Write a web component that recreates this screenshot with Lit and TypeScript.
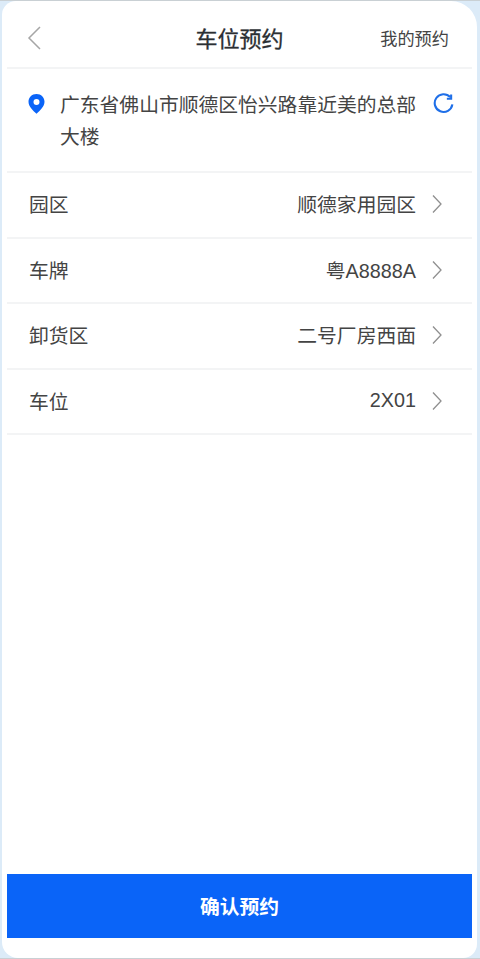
import { LitElement, html, css, svg } from "lit";
import { customElement } from "lit/decorators.js";

const chevron = svg`<path d="M2 1.500l8 8.500-8 8.500" fill="none" stroke="#8f8f8f" stroke-width="1.300"/>`;
const rows = [
  ["园区", "顺德家用园区"],
  ["车牌", "粤A8888A"],
  ["卸货区", "二号厂房西面"],
  ["车位", "2X01"],
];

@customElement("app-root")
export class AppRoot extends LitElement {
  static styles = css`
    :host {
      display: block;
      width: 480px;
      height: 959px;
      box-sizing: border-box;
      background: #c9d0d4;
      padding: 1px 0;
      font-family: "Liberation Sans", "Noto Sans CJK SC", sans-serif;
      color: #333;
      overflow: hidden;
    }
    .frame {
      height: 957px;
      background: #dcebf8;
      padding: 0 3px 0 2px;
      box-sizing: border-box;
    }
    .screen {
      height: 100%;
      background: #fff;
      border-radius: 14px 26px 14px 16px;
      padding: 0 5px 0 5px;
      box-sizing: border-box;
      display: flex;
      flex-direction: column;
    }
    .header {
      height: 68px;
      box-sizing: border-box;
      display: flex;
      align-items: center;
      justify-content: space-between;
      padding: 6px 23px 0 20px;
      border-bottom: 2px solid #f3f4f5;
      position: relative;
    }
    .back { width: 15px; height: 26px; display: block; margin-top: 1px; }
    .title {
      position: absolute;
      left: 0;
      right: 0;
      text-align: center;
      font-size: 22px;
      font-weight: 400;
      -webkit-text-stroke: 0.3px #2b2f33;
      color: #2b2f33;
    }
    .mine { font-size: 17.200px; color: #444; }
    .loc {
      height: 104px;
      box-sizing: border-box;
      display: flex;
      padding: 20px 18px 0 21px;
      border-bottom: 2px solid #f3f4f5;
    }
    .pin { width: 17px; height: 20px; margin-top: 5px; flex: none; }
    .addr {
      width: 358px;
      flex: none;
      margin-left: 15px;
      font-size: 19.800px;
      line-height: 32px;
      color: #444;
    }
    .refresh { width: 21px; height: 21px; margin: 4px 0 0 15px; flex: none; }
    .row {
      height: 65.500px;
      box-sizing: border-box;
      display: flex;
      align-items: center;
      justify-content: space-between;
      padding: 0 29px 2px 22px;
      border-bottom: 2px solid #f3f4f5;
      font-size: 19.800px;
      color: #444;
    }
    .val { display: flex; align-items: center; gap: 15px; }
    .val svg { width: 12px; height: 20px; display: block; margin-top: 1px; }
    .spacer { flex: 1; }
    .confirm {
      height: 64px;
      margin: 0 0 20px 0;
      background: #0a64f8;
      color: #fff;
      font-size: 19.800px;
      font-weight: 700;
      display: flex;
      align-items: center;
      justify-content: center;
      padding-bottom: 2px;
      box-sizing: border-box;
    }
  `;

  render() {
    return html`<div class="frame"><div class="screen">
      <div class="header">
        <svg class="back" viewBox="0 0 15 26"><path d="M13 2L2 13l11 11" fill="none" stroke="#a6a6a6" stroke-width="1.500"/></svg>
        <div class="title">车位预约</div>
        <div class="mine">我的预约</div>
      </div>
      <div class="loc">
        <svg class="pin" viewBox="0 0 17 20"><path fill-rule="evenodd" fill="#0a64f8" d="M8.500 0C3.800 0 .5 3.400.5 7.800c0 4.600 4.400 9 8 12 3.600-3 8-7.400 8-12C16.500 3.400 13.200 0 8.500 0zm0 5a3 3 0 1 1 0 6 3 3 0 0 1 0-6z"/></svg>
        <div class="addr">广东省佛山市顺德区怡兴路靠近美的总部大楼</div>
        <svg class="refresh" viewBox="0 0 22 22"><path d="M18 4.300A9.300 9.300 0 1 0 20.300 12" fill="none" stroke="#1f6fe8" stroke-width="2.200"/><path d="M19 1.500v4.500h-4.500" fill="none" stroke="#1f6fe8" stroke-width="2.200"/></svg>
      </div>
      ${rows.map(
        ([k, v]) => html`<div class="row"><span>${k}</span><span class="val">${v}<svg viewBox="0 0 12 20">${chevron}</svg></span></div>`
      )}
      <div class="spacer"></div>
      <div class="confirm">确认预约</div>
    </div></div>`;
  }
}
